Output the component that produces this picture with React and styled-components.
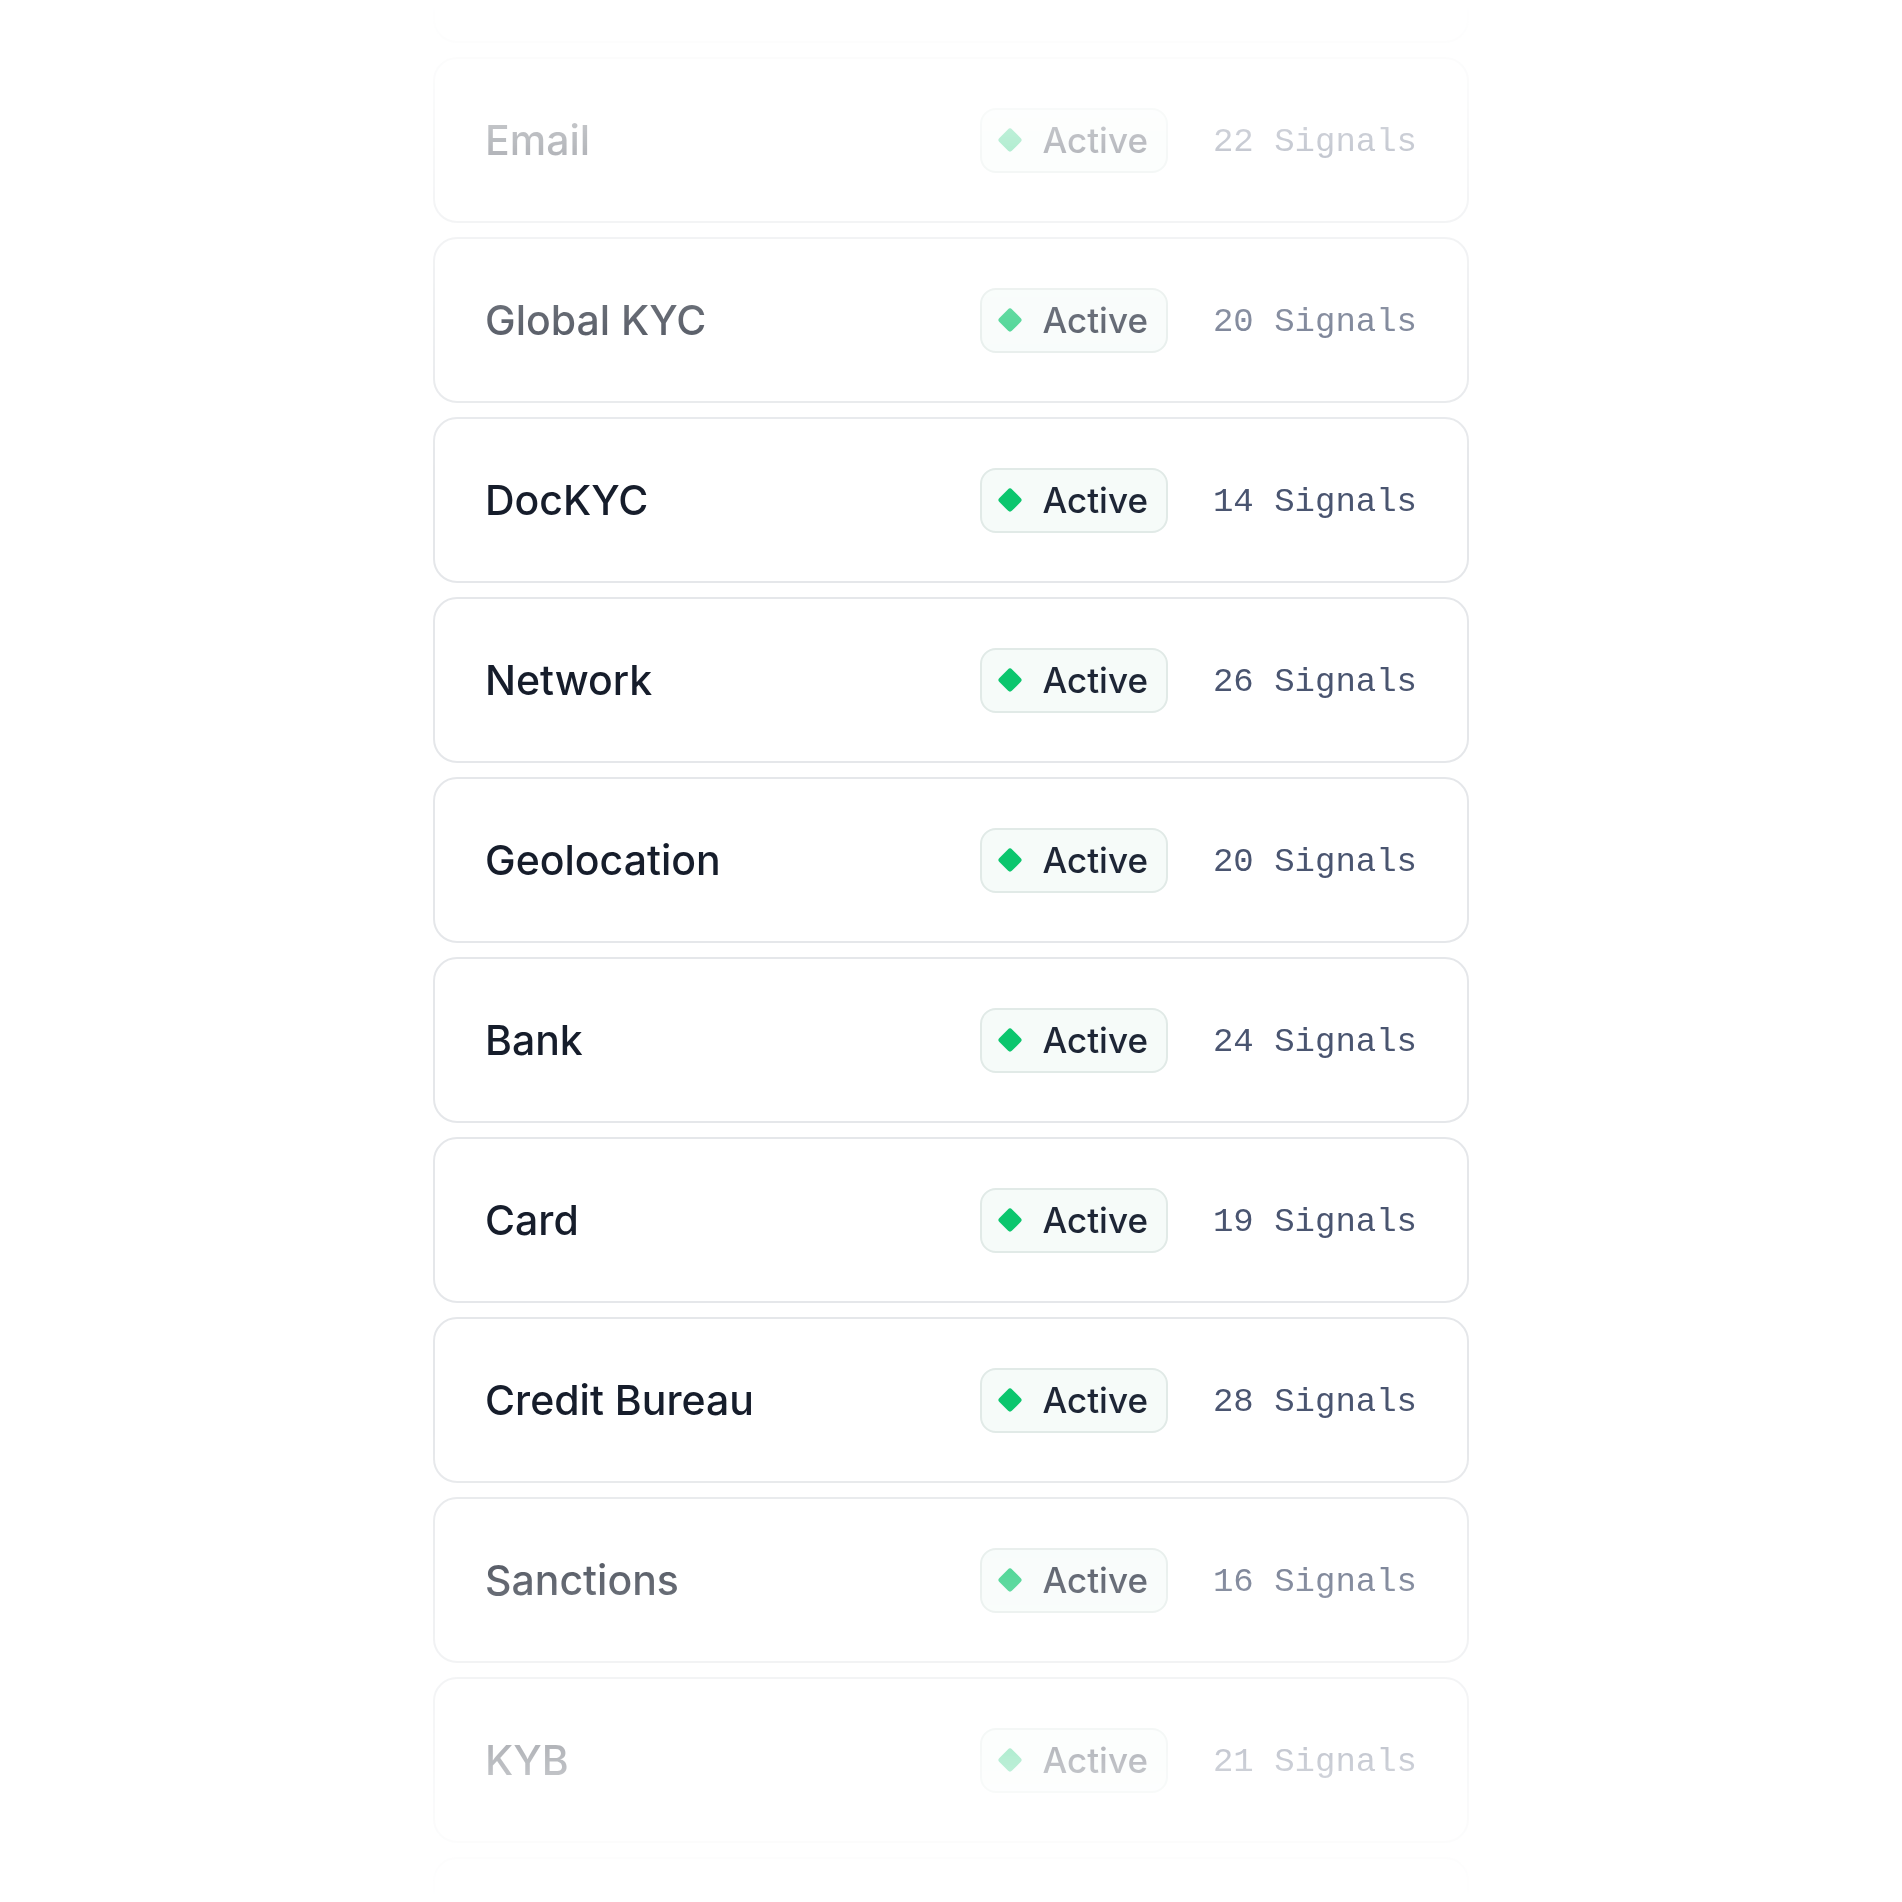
import styled, { createGlobalStyle } from 'styled-components'

const Global = createGlobalStyle`
  html, body { margin: 0; padding: 0; background: #ffffff; }
  body { font-family: Inter, "Noto Sans", sans-serif; }
`

const Viewport = styled.div`
  height: 100vh;
  overflow: hidden;
  -webkit-mask-image: linear-gradient(to bottom, transparent 0%, #000 25%, #000 75%, transparent 100%);
  mask-image: linear-gradient(to bottom, transparent 0%, #000 25%, #000 75%, transparent 100%);
`

const List = styled.div`
  width: 1036px;
  margin: -123px auto 0;
  display: flex;
  flex-direction: column;
  gap: 14px;
`

const Card = styled.div`
  box-sizing: border-box;
  height: 166px;
  display: flex;
  align-items: center;
  padding: 0 50px 0 50px;
  border: 2px solid #e5e7ea;
  border-radius: 24px;
  background: #fff;
`

const Name = styled.div`
  flex: 1;
  font-size: 41px;
  font-weight: 500;
  color: #161d2b;
`

const Badge = styled.div`
  box-sizing: border-box;
  height: 65px;
  display: inline-flex;
  align-items: center;
  gap: 20px;
  padding: 0 18px 0 16px;
  border: 2px solid #e1eae7;
  border-radius: 16px;
  background: #f6fbf9;
  font-size: 35px;
  font-weight: 500;
  color: #1e2636;
`

const Diamond = styled.span`
  width: 18px;
  height: 18px;
  margin: 0 3px;
  border-radius: 3px;
  background: #0cc66e;
  transform: rotate(45deg);
`

const Signals = styled.div`
  margin-left: 45px;
  padding-top: 3px;
  font-family: "Liberation Mono", "DejaVu Sans Mono", monospace;
  font-size: 34px;
  color: #4a5570;
`

const sources = [
  { name: 'Email', signals: 22 },
  { name: 'Global KYC', signals: 20 },
  { name: 'DocKYC', signals: 14 },
  { name: 'Network', signals: 26 },
  { name: 'Geolocation', signals: 20 },
  { name: 'Bank', signals: 24 },
  { name: 'Card', signals: 19 },
  { name: 'Credit Bureau', signals: 28 },
  { name: 'Sanctions', signals: 16 },
  { name: 'KYB', signals: 21 },
]

export default function App() {
  return (
    <>
      <Global />
      <Viewport>
        <List>
          <Card />
          {sources.map(s => (
            <Card key={s.name}>
              <Name>{s.name}</Name>
              <Badge>
                <Diamond />
                Active
              </Badge>
              <Signals>{s.signals} Signals</Signals>
            </Card>
          ))}
          <Card />
        </List>
      </Viewport>
    </>
  )
}
